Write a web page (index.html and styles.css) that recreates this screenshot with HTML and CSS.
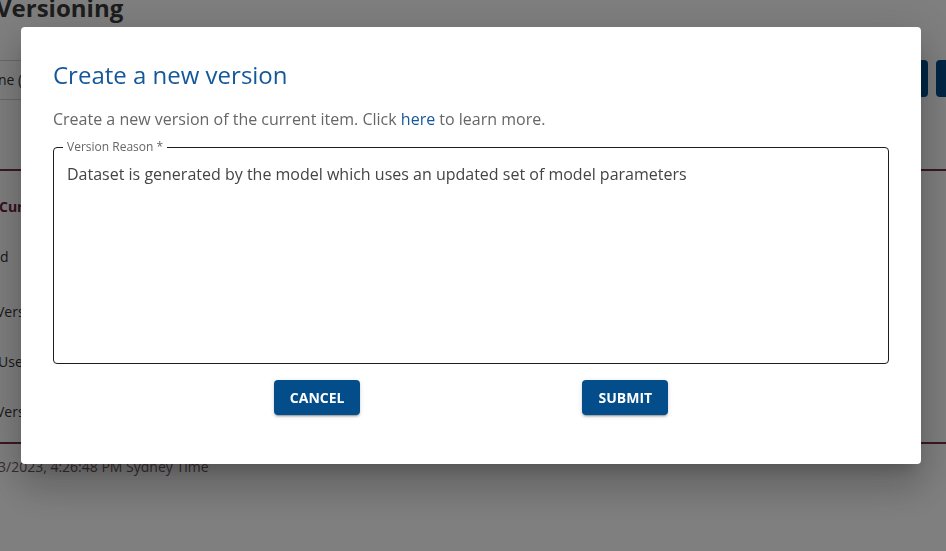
FILE: index.html
```html
<!DOCTYPE html>
<html lang="en">
<head>
<meta charset="utf-8">
<title>Versioning</title>
<link rel="stylesheet" href="styles.css">
</head>
<body>
<div class="page">
  <h1 class="page-title">Versioning</h1>
  <div class="toolbar">
    <div class="select">ne (Latest)</div>
    <div class="tb-actions">
      <span class="tb-btn"></span>
      <span class="tb-btn"></span>
    </div>
  </div>
  <div class="details">
    <div class="row row-head">Current Version</div>
    <div class="row row-id">d</div>
    <div class="row row-gap row-v">Version</div>
    <div class="row row-u">User</div>
    <div class="row row-v">Version Reason</div>
  </div>
  <div class="stamp">3/2023, 4:26:48 PM Sydney Time</div>
</div>

<div class="backdrop"></div>
<div class="dialog-wrap">
  <div class="dialog" role="dialog" aria-labelledby="dlg-title">
    <h2 class="dialog-title" id="dlg-title">Create a new version</h2>
    <p class="dialog-text">Create a new version of the current item. Click <a class="link" href="#">here</a> to learn more.</p>
    <fieldset class="field">
      <legend class="field-label">Version Reason *</legend>
      <div class="field-value">Dataset is generated by the model which uses an updated set of model parameters</div>
    </fieldset>
    <div class="actions">
      <button class="btn" type="button">CANCEL</button>
      <button class="btn" type="button">SUBMIT</button>
    </div>
  </div>
</div>
</body>
</html>
```

FILE: styles.css
```css
html, body {
  margin: 0;
  padding: 0;
  width: 946px;
  height: 551px;
  overflow: hidden;
  background: #ffffff;
  font-family: "Open Sans", "Liberation Sans", sans-serif;
}

/* ---------- background page ---------- */
.page {
  width: 1050px;
  margin-left: -4px;
  margin-top: -9px;
  color: #333333;
}

.page-title {
  margin: 0;
  font-size: 24px;
  line-height: 33px;
  font-weight: 700;
  color: #3a3a3a;
}

.toolbar {
  display: flex;
  align-items: flex-start;
  justify-content: space-between;
  margin-top: 36px;
}

.select {
  box-sizing: border-box;
  width: 500px;
  height: 40px;
  border-top: 1px solid #d2d2d2;
  border-bottom: 1px solid #d2d2d2;
  font-size: 14px;
  line-height: 38px;
  color: #333333;
  padding-left: 2px;
}

.tb-actions {
  display: flex;
  gap: 8px;
}

.tb-btn {
  width: 110px;
  height: 37px;
  border-radius: 4px;
  background: #004b8a;
}

.details {
  margin-top: 69px;
  border-top: 2px solid #7a2d4c;
  border-bottom: 2px solid #7a2d4c;
  padding: 11px 0 5px 0;
}

.row {
  height: 50px;
  line-height: 50px;
  font-size: 14px;
  color: #333333;
}

.row-head {
  font-weight: 700;
  color: #6e2442;
  padding-left: 3px;
}

.row-id {
  padding-left: 4px;
}

.row-u {
  padding-left: 2px;
}

.row-gap {
  margin-top: 5px;
}

.stamp {
  margin-top: 13px;
  font-size: 14px;
  line-height: 20px;
  color: #6e5a64;
  padding-left: 2px;
}

/* ---------- overlay & dialog ---------- */
.backdrop {
  position: fixed;
  inset: 0;
  background: rgba(0, 0, 0, 0.5);
}

.dialog-wrap {
  position: fixed;
  top: 27px;
  left: 21px;
}

.dialog {
  box-sizing: border-box;
  width: 900px;
  padding: 32px 32px 49px;
  background: #ffffff;
  border-radius: 4px;
  box-shadow: 0 11px 15px -7px rgba(0, 0, 0, 0.2),
              0 24px 38px 3px rgba(0, 0, 0, 0.14),
              0 9px 46px 8px rgba(0, 0, 0, 0.12);
}

.dialog-title {
  margin: 0;
  font-size: 24px;
  line-height: 32px;
  font-weight: 400;
  color: #15589a;
}

.dialog-text {
  margin: 16px 0 0;
  font-size: 16px;
  line-height: 24px;
  color: #666666;
}

.link {
  color: #15589a;
  text-decoration: none;
}

.field {
  margin: 8px 0 0;
  padding: 0 13px;
  border: 1px solid #1e1e1e;
  border-radius: 4px;
  min-width: 0;
}

.field-label {
  margin-left: -4px;
  padding: 0 4px;
  font-size: 12px;
  line-height: 16px;
  color: #666666;
}

.field-value {
  margin-top: 7px;
  height: 201px;
  font-size: 16px;
  line-height: 24px;
  color: #444444;
}

.actions {
  display: flex;
  justify-content: center;
  gap: 222px;
  margin-top: 16px;
}

.btn {
  font-family: "Open Sans", "Liberation Sans", sans-serif;
  font-size: 14px;
  font-weight: 700;
  line-height: 23px;
  padding: 6px 16px;
  border: 0;
  border-radius: 4px;
  background: #034d8b;
  color: #ffffff;
  box-shadow: 0 3px 1px -2px rgba(0, 0, 0, 0.2),
              0 2px 2px 0 rgba(0, 0, 0, 0.14),
              0 1px 5px 0 rgba(0, 0, 0, 0.12);
  cursor: pointer;
}
```
